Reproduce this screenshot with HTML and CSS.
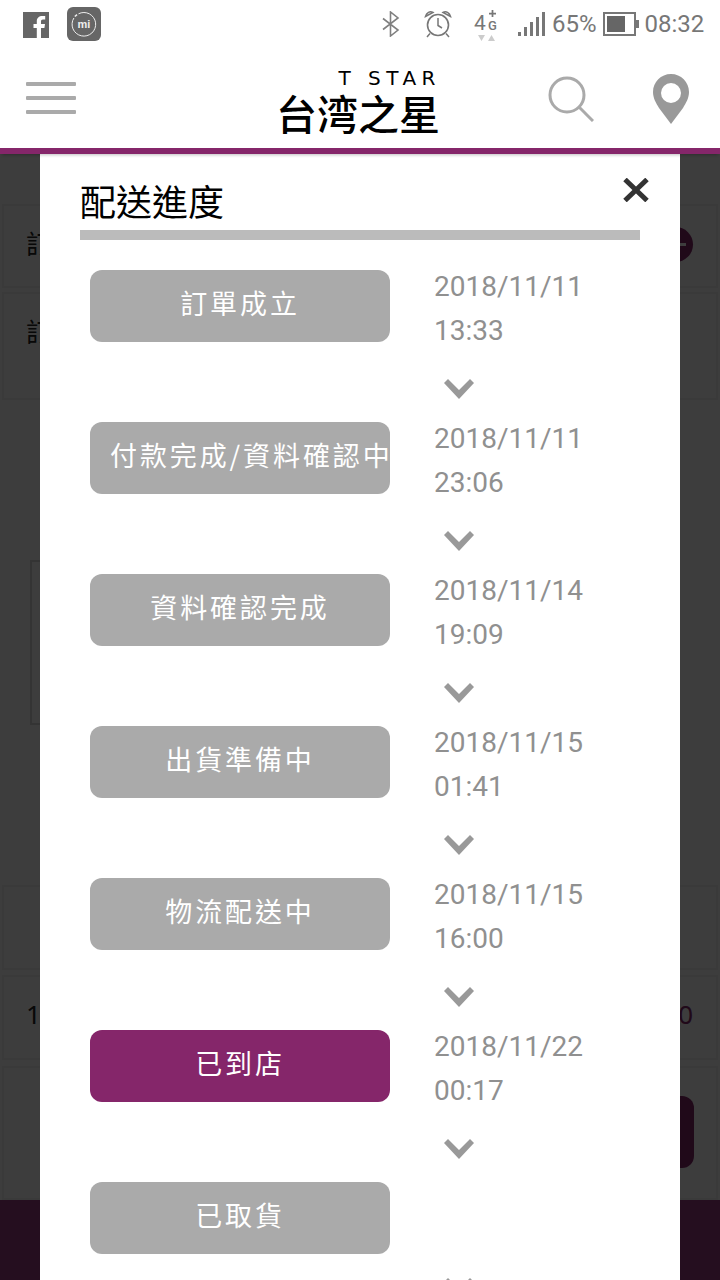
FILE: index.html
```html
<!DOCTYPE html>
<html lang="zh-Hant">
<head>
<meta charset="utf-8">
<title>配送進度</title>
<link rel="stylesheet" href="styles.css">
</head>
<body>
<div class="phone">
  <div class="status">
    <svg class="ic-fb" viewBox="0 0 26 26"><rect width="26" height="26" fill="#666"/><path d="M18 26V16h3.4l.6-4h-4V9.600c0-1.200.5-2 2-2h2.200V4.100C21.500 4 20.400 4 19.300 4 16 4 13.800 6 13.800 9.200V12H10.500v4h3.300v10z" fill="#fff"/></svg>
    <div class="ic-mi">
      <svg viewBox="0 0 34 34"><rect width="34" height="34" rx="6" fill="#666"/><path d="M11.500 6.800A11.800 11.800 0 1 1 6.900 11" fill="none" stroke="#eee" stroke-width="1"/><path d="M7.800 9.500 10 7.600" fill="none" stroke="#eee" stroke-width="1.500"/></svg>
      <span class="mi-label">mi</span>
    </div>
    <svg class="ic-bt" viewBox="0 0 18 26"><path d="M1 7.500 16 19 8.500 25V1L16 7 1 18.500" fill="none" stroke="#808080" stroke-width="1.600"/></svg>
    <svg class="ic-alarm" viewBox="0 0 28 28"><circle cx="14" cy="15" r="10.500" fill="none" stroke="#777" stroke-width="1.600"/><path d="M14 8v7.500l4 2.500" fill="none" stroke="#777" stroke-width="1.500"/><path d="M1.500 6.500C2.500 2.500 6 .8 9 2.500zM26.500 6.500C25.500 2.500 22 .8 19 2.500z" fill="none" stroke="#777" stroke-width="1.500"/><path d="M6 23.500 3 27M22 23.500l3 3.500" stroke="#777" stroke-width="1.500"/></svg>
    <div class="net">
      <span class="net-four">4</span>
      <div class="net-g"><svg class="net-plus" viewBox="0 0 8 8"><path d="M4 0v8M0 4h8" stroke="#777" stroke-width="2"/></svg><span>G</span></div>
      <svg class="net-arrows" viewBox="0 0 18 6"><path d="M0 0h7L3.500 6zM10 6h7L13.500 0z" fill="#ccc"/></svg>
    </div>
    <div class="signal"><i class="s1"></i><i class="s2"></i><i class="s3"></i><i class="s4"></i><i class="s5"></i></div>
    <span class="st-text pct">65%</span>
    <svg class="ic-batt" viewBox="0 0 36 24"><rect x="1" y="1" width="31" height="22" fill="none" stroke="#777" stroke-width="2"/><rect x="4" y="4" width="18" height="16" fill="#666"/><rect x="33" y="8" width="3" height="8" fill="#777"/></svg>
    <span class="st-text time">08:32</span>
  </div>

  <header class="topbar">
    <div class="burger"><i></i><i></i><i></i></div>
    <div class="logo">
      <div class="logo-en">T STAR</div>
      <div class="logo-zh">台湾之星</div>
    </div>
    <svg class="ic-search" viewBox="0 0 46 46"><circle cx="19" cy="19" r="17" fill="none" stroke="#aaa" stroke-width="3"/><path d="M31 31l14 14" stroke="#aaa" stroke-width="3"/></svg>
    <svg class="ic-pin" viewBox="0 0 36 50"><path fill-rule="evenodd" d="M18 0C8 0 0 8 0 18c0 6 3 11 6 16l12 16 12-16c3-5 6-10 6-16C36 8 28 0 18 0zm0 9a10 10 0 1 1 0 20 10 10 0 0 1 0-20z" fill="#999"/></svg>
  </header>

  <main class="content">
    <div class="row row-first"><span>訂</span><span class="plus"><i></i></span></div>
    <div class="row row-second"><span>訂</span></div>
    <div class="box"></div>
    <div class="row row-third"></div>
    <div class="row row-total"><span>1</span><span class="price">0</span></div>
    <div class="row row-action"><span class="action"></span></div>
  </main>
  <footer class="bottom"></footer>

  <div class="overlay">
    <section class="modal">
      <div class="modal-head">
        <h2 class="modal-title">配送進度</h2>
        <svg class="ic-close" viewBox="0 0 26 24"><path d="M2 1.500 24 22.500M24 1.500 2 22.500" stroke="#333" stroke-width="5"/></svg>
      </div>
      <div class="rule"></div>
      <ol class="steps">
        <li class="step"><div class="pill">訂單成立</div><div class="when"><p>2018/11/11</p><p>13:33</p><svg class="chev" viewBox="0 0 30 20"><path d="M4 0 15 11 26 0l4 4-15 16L0 4z"/></svg></div></li>
        <li class="step"><div class="pill">付款完成/資料確認中</div><div class="when"><p>2018/11/11</p><p>23:06</p><svg class="chev" viewBox="0 0 30 20"><path d="M4 0 15 11 26 0l4 4-15 16L0 4z"/></svg></div></li>
        <li class="step"><div class="pill">資料確認完成</div><div class="when"><p>2018/11/14</p><p>19:09</p><svg class="chev" viewBox="0 0 30 20"><path d="M4 0 15 11 26 0l4 4-15 16L0 4z"/></svg></div></li>
        <li class="step"><div class="pill">出貨準備中</div><div class="when"><p>2018/11/15</p><p>01:41</p><svg class="chev" viewBox="0 0 30 20"><path d="M4 0 15 11 26 0l4 4-15 16L0 4z"/></svg></div></li>
        <li class="step"><div class="pill">物流配送中</div><div class="when"><p>2018/11/15</p><p>16:00</p><svg class="chev" viewBox="0 0 30 20"><path d="M4 0 15 11 26 0l4 4-15 16L0 4z"/></svg></div></li>
        <li class="step"><div class="pill pill-on">已到店</div><div class="when"><p>2018/11/22</p><p>00:17</p><svg class="chev" viewBox="0 0 30 20"><path d="M4 0 15 11 26 0l4 4-15 16L0 4z"/></svg></div></li>
        <li class="step step-empty"><div class="pill">已取貨</div><div class="when"><svg class="chev" viewBox="0 0 30 20"><path d="M4 0 15 11 26 0l4 4-15 16L0 4z"/></svg></div></li>
      </ol>
    </section>
  </div>
</div>
</body>
</html>
```
FILE: styles.css
```css
* { box-sizing: border-box; }
html, body { margin: 0; padding: 0; }
body { background: #fff; font-family: "Noto Sans CJK TC", "Noto Sans", sans-serif; }
.phone { position: relative; width: 720px; height: 1280px; overflow: hidden; background: #fff; display: flex; flex-direction: column; }

/* status bar */
.status { height: 48px; flex: none; display: flex; align-items: center; padding-left: 23px; }
.ic-fb { width: 26px; height: 26px; margin-top: 1px; flex: none; }
.ic-mi { position: relative; width: 34px; height: 34px; margin-left: 18px; flex: none; }
.ic-mi svg { display: block; width: 34px; height: 34px; }
.mi-label { position: absolute; inset: 0; display: flex; align-items: center; justify-content: center; color: #eee; font: 700 11px/1 "Liberation Sans", sans-serif; }
.ic-bt { width: 18px; height: 26px; margin-left: 281px; flex: none; }
.ic-alarm { width: 28px; height: 28px; margin-left: 24px; flex: none; margin-top: -1px; }
.net { position: relative; width: 24px; height: 32px; margin-left: 22px; flex: none; }
.net-four { position: absolute; left: 0; top: 5px; font: 400 21px/21px Roboto, sans-serif; color: #777; }
.net-g { position: absolute; left: 13px; top: 2px; display: flex; flex-direction: column; align-items: center; width: 11px; font: 500 13px/13px Roboto, sans-serif; color: #777; }
.net-plus { width: 7px; height: 7px; margin-bottom: 2px; }
.net-arrows { position: absolute; left: 4px; top: 27px; width: 18px; height: 6px; }
.signal { display: flex; align-items: flex-end; gap: 3px; height: 24px; margin-left: 20px; flex: none; }
.signal i { display: block; width: 3px; background: #777; }
.s1 { height: 4px; } .s2 { height: 9px; } .s3 { height: 14px; } .s4 { height: 19px; } .s5 { height: 24px; }
.st-text { font: 400 24px/28px Roboto, sans-serif; color: #777; }
.pct { margin-left: 7px; }
.ic-batt { width: 36px; height: 24px; margin-left: 6px; flex: none; }
.time { margin-left: 6px; }

/* top bar */
.topbar { position: relative; z-index: 3; height: 106px; flex: none; display: flex; align-items: center; padding-left: 26px; background: #fff; border-bottom: 6px solid #85266a; box-shadow: 0 3px 3px -2px rgba(0, 0, 0, .25); }
.burger { width: 50px; flex: none; display: flex; flex-direction: column; gap: 10px; }
.burger i { display: block; height: 4px; background: #aaa; border-radius: 1px; }
.logo { width: 160px; margin-left: 202px; flex: none; color: #000; margin-top: 4px; }
.logo-en { font: 400 20px/20px "DejaVu Sans", sans-serif; letter-spacing: 5.5px; margin-right: -3px; text-align: right; white-space: nowrap; }
.logo-zh { font: 500 41px/42px "Noto Sans CJK TC", sans-serif; white-space: nowrap; margin: 3px 0 0 -2px; }
.ic-search { width: 46px; height: 46px; margin-left: 110px; flex: none; margin-top: 2px; }
.ic-pin { width: 36px; height: 50px; margin-left: 59px; flex: none; margin-top: 2px; }

/* page behind */
.content { flex: 1; min-height: 0; padding-top: 50px; background: #fff; display: flex; flex-direction: column; }
.row { margin: 0 2px; padding: 0 24px 0 22px; border: 2px solid #f0f0f0; background: #fcfcfc; display: flex; justify-content: space-between; align-items: center; font: 400 26px/34px "Noto Sans", "Noto Sans CJK TC", sans-serif; color: #222; flex: none; }
.row-first { height: 84px; padding-bottom: 4px; }
.row-second { height: 108px; margin-top: 4px; align-items: flex-start; padding-top: 21px; }
.box { width: 420px; height: 165px; margin: 160px 0 0 30px; border: 2px solid #d8d8d8; flex: none; }
.row-third { height: 85px; margin-top: 160px; }
.row-total { height: 85px; margin-top: 5px; padding-bottom: 8px; }
.row-action { height: 134px; margin-top: 6px; justify-content: flex-end; align-items: flex-start; padding: 28px 22px 0 0; }
.plus { width: 35px; height: 35px; margin-right: -1px; border-radius: 50%; background: #85266a; display: flex; align-items: center; justify-content: center; flex: none; }
.plus i { display: block; width: 20px; height: 3px; background: #fff; }
.price { color: #85266a; margin-right: -1px; }
.action { display: block; width: 200px; height: 72px; border-radius: 12px; background: #85266a; }
.bottom { height: 80px; flex: none; background: #9c3c80; }

/* overlay and modal */
.overlay { position: absolute; z-index: 2; left: 0; right: 0; top: 154px; bottom: 0; background: rgba(0, 0, 0, .76); }
.modal { position: absolute; left: 40px; top: 0; width: 640px; height: 1300px; padding: 0 40px; background: #fff; overflow: hidden; }
.modal-head { height: 76px; display: flex; justify-content: space-between; align-items: flex-start; }
.modal-title { margin: 22px 0 0; font: 400 36px/48px "Noto Sans CJK TC", sans-serif; color: #000; }
.ic-close { width: 26px; height: 24px; margin: 24px -9px 0 0; flex: none; }
.rule { height: 10px; background: #bbb; }
.steps { list-style: none; margin: 0; padding: 30px 0 0 10px; }
.step { display: flex; gap: 44px; height: 152px; }
.pill { width: 300px; height: 72px; flex: none; padding: 0 20px; border-radius: 12px; background: #aaa; color: #fff; font: 400 27px/66px "Noto Sans CJK TC", sans-serif; letter-spacing: 2.9px; text-align: center; white-space: nowrap; }
.pill-on { background: #85266a; }
.when { margin-top: -5px; font: 400 28px/44px Roboto, sans-serif; color: #909090; }
.when p { margin: 0; white-space: nowrap; }
.chev { display: block; width: 30px; height: 20px; margin: 26px 0 0 10px; fill: #999; }
.step-empty .chev { margin-top: 101px; }
```
